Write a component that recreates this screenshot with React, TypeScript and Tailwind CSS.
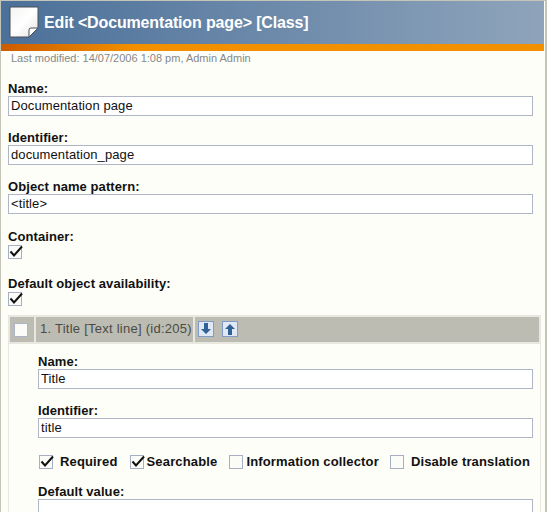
import React from 'react';

const Field = ({ label, value, className = '' }: { label: string; value: string; className?: string }) => (
  <div className={className}>
    <label className="block text-[13px] leading-[14px] font-bold text-[#111] tracking-[0.08px]">{label}</label>
    <div className="h-[20px] border border-[#b0b6c6] bg-white px-[2px] text-[13px] leading-[18px] tracking-[0.1px] text-[#111] whitespace-nowrap overflow-hidden">
      {value}
    </div>
  </div>
);

const Check = ({ checked = false }: { checked?: boolean }) => (
  <span className="relative block w-[14px] h-[14px] shrink-0 border border-[#a8afc2] bg-[#fbfbf8]">
    {checked && (
      <svg className="absolute left-0 top-0 overflow-visible" width="14" height="14" viewBox="0 0 14 14" fill="none">
        <path d="M1.5 5.5 L5 9.5 L13 0.5" stroke="#111" strokeWidth="2" />
      </svg>
    )}
  </span>
);

const ArrowButton = ({ up = false }: { up?: boolean }) => (
  <span className="block w-[16px] h-[16px] border border-[#7f9cc6] bg-[#dfe8f4]">
    <svg width="14" height="14" viewBox="0 0 14 14">
      <path
        d={up ? 'M7 2 L12 7 H9 V13 H5 V7 H2 Z' : 'M7 12 L12 7 H9 V1 H5 V7 H2 Z'}
        fill="#2f6096"
      />
    </svg>
  </span>
);

export default function App() {
  return (
    <div className="w-[547px] h-[512px] overflow-hidden bg-[#fdfef8] font-['Liberation_Sans',Arial,sans-serif] border-t border-l border-r-2 border-[#c4c4b8]">
      <div className="w-[543px] h-[43px] flex items-center bg-gradient-to-r from-[#4b7099] to-[#8fa4bb]">
        <svg className="ml-[8px] mb-[2px] shrink-0" width="30" height="32" viewBox="0 0 30 32">
          <defs>
            <linearGradient id="sheet" x1="0" y1="0" x2="1" y2="1">
              <stop offset="0" stopColor="#f4f4f2" />
              <stop offset="0.5" stopColor="#ffffff" />
              <stop offset="1" stopColor="#e2e2e0" />
            </linearGradient>
          </defs>
          <path d="M1 1 H29 V22 L20 31 H1 Z" fill="url(#sheet)" stroke="#4a4f57" />
          <path d="M29 22 H22 Q20 22 20 24 V31 Z" fill="#fff" stroke="#4a4f57" />
        </svg>
        <h1 className="ml-[5px] text-[16px] tracking-[-0.15px] font-bold text-white whitespace-nowrap">Edit &lt;Documentation page&gt; [Class]</h1>
      </div>
      <div className="w-[543px] h-[7px] bg-gradient-to-r from-[#cc5c00] via-[#f29000] via-[25%] to-[#f29000]" />
      <div className="pl-[10px] h-[14px] text-[11px] leading-[14px] text-[#888]">Last modified: 14/07/2006 1:08 pm, Admin Admin</div>

      <div className="pl-[7px] w-[532px] pt-[17px]">
        <Field label="Name:" value="Documentation page" />
        <Field className="mt-[15px]" label="Identifier:" value="documentation_page" />
        <Field className="mt-[15px]" label="Object name pattern:" value="<title>" />
        <div className="mt-[16px] text-[13px] leading-[14px] font-bold text-[#111] tracking-[0.08px]">Container:</div>
        <div className="mt-[1px]"><Check checked /></div>
        <div className="mt-[18px] text-[13px] leading-[14px] font-bold text-[#111] tracking-[0.08px]">Default object availability:</div>
        <div className="mt-[1px]"><Check checked /></div>
      </div>

      <div className="ml-[7px] mt-[9px] w-[533px] border-x border-[#e8e8e0]">
        <div className="flex h-[29px] bg-[#bcbcb2] border-x border-y-2 border-[#e8e8e0]">
          <div className="w-[26px] pl-[4px] flex items-center border-r-2 border-[#e8e8e0]">
            <span className="block w-[14px] h-[14px] bg-[#fbfbf8] border border-[#aeb4c8]" />
          </div>
          <div className="w-[159px] pl-[4px] pb-[1px] flex items-center border-r-2 border-[#e8e8e0] text-[13px] tracking-[0.25px] text-[#4b4b46] whitespace-nowrap">
            1. Title [Text line] (id:205)
          </div>
          <div className="pl-[3px] pb-[1px] flex items-center gap-[8px]">
            <ArrowButton />
            <ArrowButton up />
          </div>
        </div>
        <div className="pl-[29px] pr-[7px] pt-[11px]">
          <Field label="Name:" value="Title" />
          <Field className="mt-[15px]" label="Identifier:" value="title" />
          <div className="mt-[14px] ml-[1px] flex items-center text-[13px] tracking-[0.15px] font-bold text-[#111] whitespace-nowrap">
            <Check checked />
            <span className="ml-[7px]">Required</span>
            <span className="ml-[12px]"><Check checked /></span>
            <span className="ml-[3px]">Searchable</span>
            <span className="ml-[12px]"><Check /></span>
            <span className="ml-[3px]">Information collector</span>
            <span className="ml-[11px]"><Check /></span>
            <span className="ml-[7px]">Disable translation</span>
          </div>
          <Field className="mt-[13px]" label="Default value:" value="" />
        </div>
      </div>
    </div>
  );
}
